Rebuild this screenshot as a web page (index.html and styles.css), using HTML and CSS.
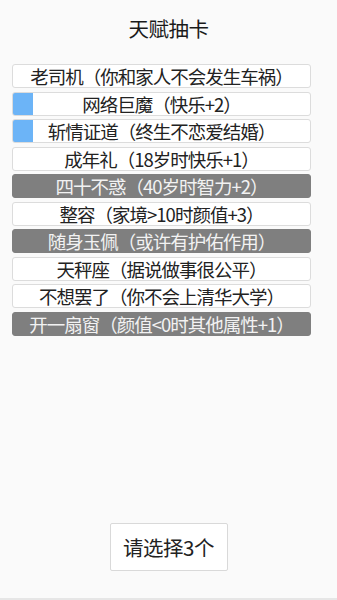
FILE: index.html
```html
<!DOCTYPE html>
<html lang="zh">
<head>
<meta charset="utf-8">
<title>天赋抽卡</title>
<link rel="stylesheet" href="styles.css">
</head>
<body>
<div class="page">
  <h1 class="title">天赋抽卡</h1>
  <ul class="talents">
    <li class="talent">老司机（你和家人不会发生车祸）</li>
    <li class="talent selected">网络巨魔（快乐+2）</li>
    <li class="talent selected">斩情证道（终生不恋爱结婚）</li>
    <li class="talent">成年礼（18岁时快乐+1）</li>
    <li class="talent rare">四十不惑（40岁时智力+2）</li>
    <li class="talent">整容（家境&gt;10时颜值+3）</li>
    <li class="talent rare">随身玉佩（或许有护佑作用）</li>
    <li class="talent">天秤座（据说做事很公平）</li>
    <li class="talent">不想罢了（你不会上清华大学）</li>
    <li class="talent rare">开一扇窗（颜值&lt;0时其他属性+1）</li>
  </ul>
  <button class="confirm" type="button">请选择3个</button>
</div>
</body>
</html>
```

FILE: styles.css
```css
html, body {
  margin: 0;
  padding: 0;
  background: #fafafa;
}

.page {
  box-sizing: border-box;
  height: 600px;
  display: flex;
  flex-direction: column;
  border-bottom: 2px solid #e6e6e6;
  font-family: "Noto Sans CJK SC", "Noto Sans", sans-serif;
  color: #222;
}

.title {
  margin: 14px 0 0;
  font-size: 20.5px;
  line-height: 28px;
  font-weight: normal;
  letter-spacing: -0.5px;
  text-align: center;
  color: #1a1a1a;
}

.talents {
  list-style: none;
  margin: 22px 0 0 12px;
  padding: 0;
  width: 299px;
}

.talent {
  box-sizing: border-box;
  height: 24px;
  margin-bottom: 3.5px;
  border: 1px solid #dcdcdc;
  border-radius: 3px;
  background: #fff;
  font-size: 18.5px;
  letter-spacing: -1px;
  line-height: 22px;
  text-align: center;
  white-space: nowrap;
  overflow: hidden;
  color: #222;
}

.talent.selected {
  background: linear-gradient(to right, #6cb4f7 20px, #fff 20px);
}

.talent.rare {
  background: #7f7f7f;
  border-color: #7f7f7f;
  color: #f2f2f2;
}

.confirm {
  margin: auto auto 27px;
  width: 118px;
  height: 48px;
  border: 1px solid #d9d9d9;
  border-radius: 2px;
  background: #fff;
  font-family: "Noto Sans CJK SC", "Noto Sans", sans-serif;
  font-size: 20.5px;
  letter-spacing: -0.5px;
  color: #222;
  padding: 0;
}
```
